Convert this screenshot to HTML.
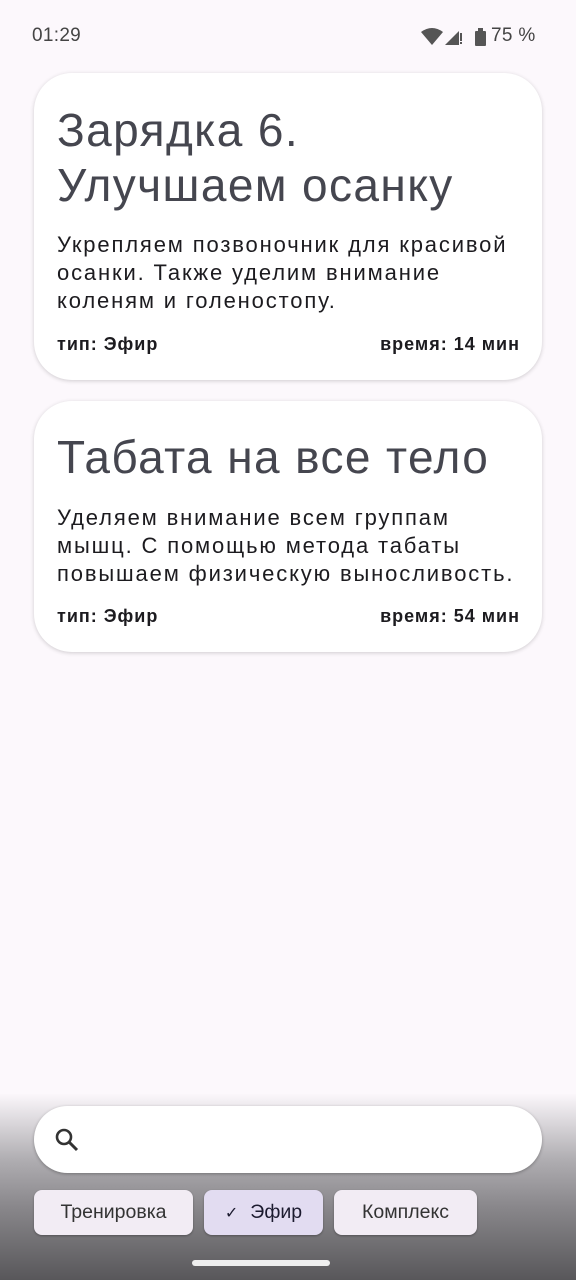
<!DOCTYPE html>
<html><head><meta charset="utf-8"><style>
*{margin:0;padding:0;box-sizing:border-box}
body{width:576px;height:1280px;background:#fcf8fc;font-family:"Liberation Sans",sans-serif;position:relative;overflow:hidden;color:#1c1b1f}
.sb{position:absolute;top:25px;font-size:19px;color:#444;letter-spacing:0.3px}
.card{position:absolute;left:34px;width:508px;background:#fff;border-radius:38px;box-shadow:0 1px 4px rgba(0,0,0,.18)}
.t{position:absolute;left:23px;font-size:46px;letter-spacing:1.4px;color:#45464f;white-space:nowrap;line-height:55px}
.d{position:absolute;left:23px;font-size:22px;letter-spacing:1.85px;line-height:28px;white-space:nowrap}
.f{position:absolute;font-size:18px;font-weight:bold;letter-spacing:1px;white-space:nowrap}
.bot{position:absolute;left:0;top:1094px;width:576px;height:186px;background:linear-gradient(#fbf7fb 0%,#b0aeb2 35%,#8a888c 60%,#58575a 100%)}
.search{position:absolute;left:34px;top:1106px;width:508px;height:67px;background:#fff;border-radius:34px;box-shadow:0 1px 3px rgba(0,0,0,.3)}
.chip{position:absolute;top:1190px;height:45px;background:#f2ecf4;border-radius:8px;font-size:19.5px;color:#333;line-height:45px;text-align:center;box-shadow:0 1px 2px rgba(0,0,0,.3)}
</style></head><body>
<div class="sb" style="left:32px">01:29</div>
<svg style="position:absolute;left:421px;top:27px" width="70" height="20">
<path d="M0 5 Q11 -3 22 5 L11 18 Z" fill="#555"/>
<path d="M24 18 L38 4 L38 18 Z" fill="#555"/><rect x="39" y="6" width="2" height="8" fill="#555"/><rect x="39" y="15" width="2" height="2" fill="#555"/>
<rect x="54" y="4" width="11" height="15" rx="1" fill="#555"/><rect x="57" y="1" width="5" height="3" fill="#555"/>
</svg>
<div class="sb" style="left:491px">75 %</div>

<div class="card" style="top:73px;height:307px">
<div class="t" style="top:30px">Зарядка 6.</div>
<div class="t" style="top:85px">Улучшаем осанку</div>
<div class="d" style="top:158px">Укрепляем позвоночник для красивой</div>
<div class="d" style="top:186px">осанки. Также уделим внимание</div>
<div class="d" style="top:214px">коленям и голеностопу.</div>
<div class="f" style="left:23px;top:261px">тип: Эфир</div>
<div class="f" style="right:22px;top:261px">время: 14 мин</div>
</div>

<div class="card" style="top:401px;height:251px">
<div class="t" style="top:29px">Табата на все тело</div>
<div class="d" style="top:103px">Уделяем внимание всем группам</div>
<div class="d" style="top:131px">мышц. С помощью метода табаты</div>
<div class="d" style="top:159px">повышаем физическую выносливость.</div>
<div class="f" style="left:23px;top:205px">тип: Эфир</div>
<div class="f" style="right:22px;top:205px">время: 54 мин</div>
</div>

<div class="bot"></div>
<div class="search"><svg style="position:absolute;left:20px;top:21px" width="26" height="26"><circle cx="10" cy="10" r="7" stroke="#333" stroke-width="2.6" fill="none"/><path d="M15 15 L23 23" stroke="#333" stroke-width="3"/></svg></div>
<div class="chip" style="left:34px;width:159px">Тренировка</div>
<div class="chip" style="left:204px;width:119px;background:#e2dcf1;color:#1c1b2f"><span style="font-size:16px;margin-right:12px">✓</span>Эфир</div>
<div class="chip" style="left:334px;width:143px">Комплекс</div>
<div style="position:absolute;left:192px;top:1260px;width:138px;height:6px;border-radius:3px;background:#eee"></div>
</body></html>
